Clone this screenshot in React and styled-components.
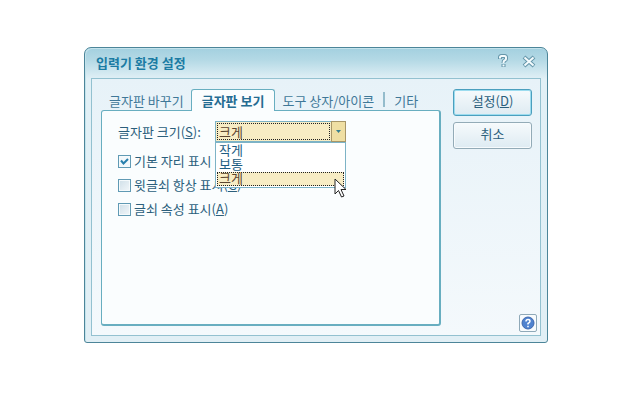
import React, { useState } from 'react';
import styled, { createGlobalStyle } from 'styled-components';

const GlobalStyle = createGlobalStyle`
  * {
    box-sizing: border-box;
  }

  body {
    margin: 0;
    background: #ffffff;
    font-family: 'Noto Sans CJK KR', 'Liberation Sans', sans-serif;
    font-size: 13px;
    line-height: 16px;
    color: #2b5f7c;
  }

  button,
  select {
    font: inherit;
    color: inherit;
    margin: 0;
    padding: 0;
  }
`;

const Page = styled.div`
  padding: 47px 78px 48px 84px;
`;

const Dialog = styled.div`
  border: 1px solid #4c8599;
  border-radius: 7px 7px 3px 3px;
  background: linear-gradient(#a3d0df 0, #b4d9e5 12px, #e1f0f6 31px, #e1eff5 100%);
  box-shadow: inset 1px 1px 0 #c4e3ec;
  padding: 0 6px 6px;
`;

const TitleBar = styled.div`
  display: flex;
  align-items: center;
  height: 30px;
  padding: 0 3px 0 5px;
`;

const Title = styled.h1`
  flex: 1;
  margin: 0;
  font-size: 13px;
  font-weight: 700;
  line-height: 30px;
  color: #1b7ba3;
`;

const TitleButton = styled.button`
  display: flex;
  margin-left: 10px;
  padding-bottom: 4px;
  border: none;
  background: none;
`;

const Frame = styled.div`
  display: flex;
  gap: 12px;
  border: 1px solid #93c1d0;
  background: linear-gradient(#e7f2f8, #f4f9fc);
  padding: 10px 3px 3px 9px;
`;

const Main = styled.div`
  flex: 1;
  min-width: 0;
  padding-bottom: 6px;
`;

const TabList = styled.div`
  display: flex;
  align-items: flex-end;
  height: 22px;
  margin-bottom: -1px;
  padding-left: 1px;
`;

const Tab = styled.button`
  position: relative;
  height: 22px;
  padding: ${(props) => (props.$active ? '0 10px' : '0 6px')};
  white-space: nowrap;
  line-height: 20px;
  color: ${(props) => (props.$active ? '#246c92' : '#3f7898')};
  font-weight: ${(props) => (props.$active ? 700 : 400)};
  border: 1px solid ${(props) => (props.$active ? '#68aec0' : 'transparent')};
  border-bottom: none;
  border-radius: 3px 3px 0 0;
  background: ${(props) => (props.$active ? '#fafdfe' : 'none')};
`;

const Divider = styled.span`
  width: 2px;
  height: 15px;
  margin: 0 2px 4px;
  background: #94bccc;
`;

const Panel = styled.div`
  min-height: 216px;
  padding: 10px 15px;
  border: 1px solid #68aec0;
  border-right-width: 2px;
  border-bottom-width: 2px;
  border-radius: 3px;
  background: #fafdfe;
`;

const Field = styled.div`
  display: flex;
  align-items: center;
  margin-bottom: 7px;
`;

const FieldLabel = styled.label`
  width: 98px;
  padding-left: 1px;
`;

const Combo = styled.div`
  position: relative;
  width: 131px;
`;

const Select = styled.select`
  display: block;
  appearance: none;
  width: 100%;
  height: 21px;
  border: 1px solid #7db3c6;
  border-radius: 0;
  padding: 0 20px 0 3px;
  background: #f7ecc4;
  color: #5d4630;
  line-height: 19px;
  outline: none;
`;

const FocusRing = styled.span`
  position: absolute;
  inset: 2px 16px 2px 2px;
  border: 1px dotted #222222;
  pointer-events: none;
`;

const ComboArrow = styled.span`
  position: absolute;
  top: 0;
  right: 0;
  display: flex;
  align-items: center;
  justify-content: center;
  width: 15px;
  height: 21px;
  border: 1px solid #a79668;
  background: #efdfa3;
  pointer-events: none;
`;

const Options = styled.ul`
  position: absolute;
  z-index: 1;
  top: 21px;
  left: 0;
  right: 0;
  margin: 0;
  padding: 1px;
  list-style: none;
  border: 1px solid #7db3c6;
  background: #ffffff;
`;

const Option = styled.li`
  height: 14px;
  padding-left: 1px;
  line-height: 10px;
  border: 1px ${(props) => (props.$selected ? 'dotted #222222' : 'solid transparent')};
  background: ${(props) => (props.$selected ? '#f7ecc4' : 'none')};
  color: ${(props) => (props.$selected ? '#5d4630' : '#1d5d82')};
  cursor: default;
`;

const Pointer = styled.svg`
  position: absolute;
  z-index: 2;
  top: 57px;
  left: 119px;
  pointer-events: none;
`;

const CheckRow = styled.label`
  display: flex;
  align-items: center;
  gap: 3px;
  width: max-content;
  height: 24px;
`;

const Checkbox = styled.input`
  appearance: none;
  display: block;
  width: 13px;
  height: 13px;
  margin: 0;
  margin-left: 1px;
  border: 1px solid #609ab4;
  box-shadow: inset 0 0 0 1px #f5fafc;
  background: linear-gradient(135deg, #cfdfe8, #f2f7fa);

  &:checked {
    background: #f2f8fb
      url("data:image/svg+xml,%3Csvg xmlns='http://www.w3.org/2000/svg' viewBox='0 0 11 11'%3E%3Cpath d='M2 4.5l2.500 3L9 3' fill='none' stroke='%23277fac' stroke-width='2'/%3E%3C/svg%3E");
  }
`;

const Side = styled.div`
  display: flex;
  flex-direction: column;
  align-items: flex-end;
  width: 84px;
`;

const ActionButton = styled.button`
  width: 79px;
  height: 27px;
  margin: 0 5px 6px 0;
  padding-bottom: 3px;
  border: 1px solid ${(props) => (props.$primary ? '#4b9fbe' : '#93abb7')};
  border-radius: 3px;
  box-shadow: inset 0 0 0 1px ${(props) => (props.$primary ? '#9cdcef' : '#f7fbfd')};
  background: linear-gradient(#f6fafc, #deebf2);
`;

const HelpButton = styled.button`
  display: flex;
  align-items: center;
  justify-content: center;
  width: 18px;
  height: 18px;
  margin-top: auto;
  border: 1px solid #8fa9b8;
  border-radius: 2px;
  background: #f8fbfd;
`;

const sizes = ['작게', '보통', '크게'];

const App = () => {
  const [size, setSize] = useState('크게');

  return (
    <>
      <GlobalStyle />
      <Page>
        <Dialog role="dialog" aria-labelledby="title">
          <TitleBar>
            <Title id="title">입력기 환경 설정</Title>
            <TitleButton aria-label="도움말">
              <svg width="16" height="16" viewBox="0 0 16 16" fill="none">
                <path d="M4 6V4.500Q4 3 5.500 3h3Q10 3 10 4.500V6Q10 7 8.500 7.500Q7.500 8 7.500 10M7.500 11v3" stroke="#6596aa" strokeWidth="4" />
                <path d="M4 5.500V4.500Q4 3 5.500 3h3Q10 3 10 4.500V6Q10 7 8.500 7.500Q7.500 8 7.500 10M7.500 11.500v2" stroke="#f4fbfd" strokeWidth="2" />
              </svg>
            </TitleButton>
            <TitleButton aria-label="닫기">
              <svg width="16" height="16" viewBox="0 0 16 16">
                <path d="M2 4l10 9M12 4l-10 9" stroke="#6596aa" strokeWidth="4" />
                <path d="M2.500 4.500l9 8M11.500 4.500l-9 8" stroke="#f4fbfd" strokeWidth="2" />
              </svg>
            </TitleButton>
          </TitleBar>

          <Frame>
            <Main>
              <TabList role="tablist">
                <Tab role="tab">글자판 바꾸기</Tab>
                <Tab role="tab" aria-selected="true" $active>글자판 보기</Tab>
                <Tab role="tab">도구 상자/아이콘</Tab>
                <Divider />
                <Tab role="tab">기타</Tab>
              </TabList>

              <Panel role="tabpanel">
                <Field>
                  <FieldLabel htmlFor="size">글자판 크기(<u>S</u>):</FieldLabel>
                  <Combo>
                    <Select id="size" value={size} onChange={(e) => setSize(e.target.value)}>
                      {sizes.map((s) => (
                        <option key={s}>{s}</option>
                      ))}
                    </Select>
                    <FocusRing />
                    <ComboArrow>
                      <svg width="5" height="3" viewBox="0 0 5 3">
                        <path d="M0 0h5L2.500 3z" fill="#37808f" />
                      </svg>
                    </ComboArrow>
                    {/* open list, lies over the check boxes */}
                    <Options role="listbox" aria-label="글자판 크기">
                      {sizes.map((s) => (
                        <Option
                          key={s}
                          role="option"
                          aria-selected={s === size}
                          $selected={s === size}
                          onClick={() => setSize(s)}
                        >
                          {s}
                        </Option>
                      ))}
                    </Options>
                    <Pointer width="13" height="21" viewBox="0 0 13 21">
                      <path d="M1 1v15l3.500-3.500L7.500 19l2.500-1-3-6.500h5z" fill="#ffffff" stroke="#222222" />
                    </Pointer>
                  </Combo>
                </Field>
                <CheckRow>
                  <Checkbox type="checkbox" defaultChecked />
                  <span>기본 자리 표시</span>
                </CheckRow>
                <CheckRow>
                  <Checkbox type="checkbox" />
                  <span>윗글쇠 항상 표시(<u>G</u>)</span>
                </CheckRow>
                <CheckRow>
                  <Checkbox type="checkbox" />
                  <span>글쇠 속성 표시(<u>A</u>)</span>
                </CheckRow>
              </Panel>
            </Main>

            <Side>
              <ActionButton $primary>설정(<u>D</u>)</ActionButton>
              <ActionButton>취소</ActionButton>
              <HelpButton aria-label="도움말">
                <svg width="14" height="14" viewBox="0 0 14 14">
                  <circle cx="7" cy="7" r="6" fill="#4f82cf" stroke="#3d67ad" />
                  <path d="M5 5.500q0-2 2-2t2 1.700Q9 6.500 7 7.500v1M7 9.800v1.400" fill="none" stroke="#ffffff" strokeWidth="1.500" />
                </svg>
              </HelpButton>
            </Side>
          </Frame>
        </Dialog>
      </Page>
    </>
  );
};

export default App;
